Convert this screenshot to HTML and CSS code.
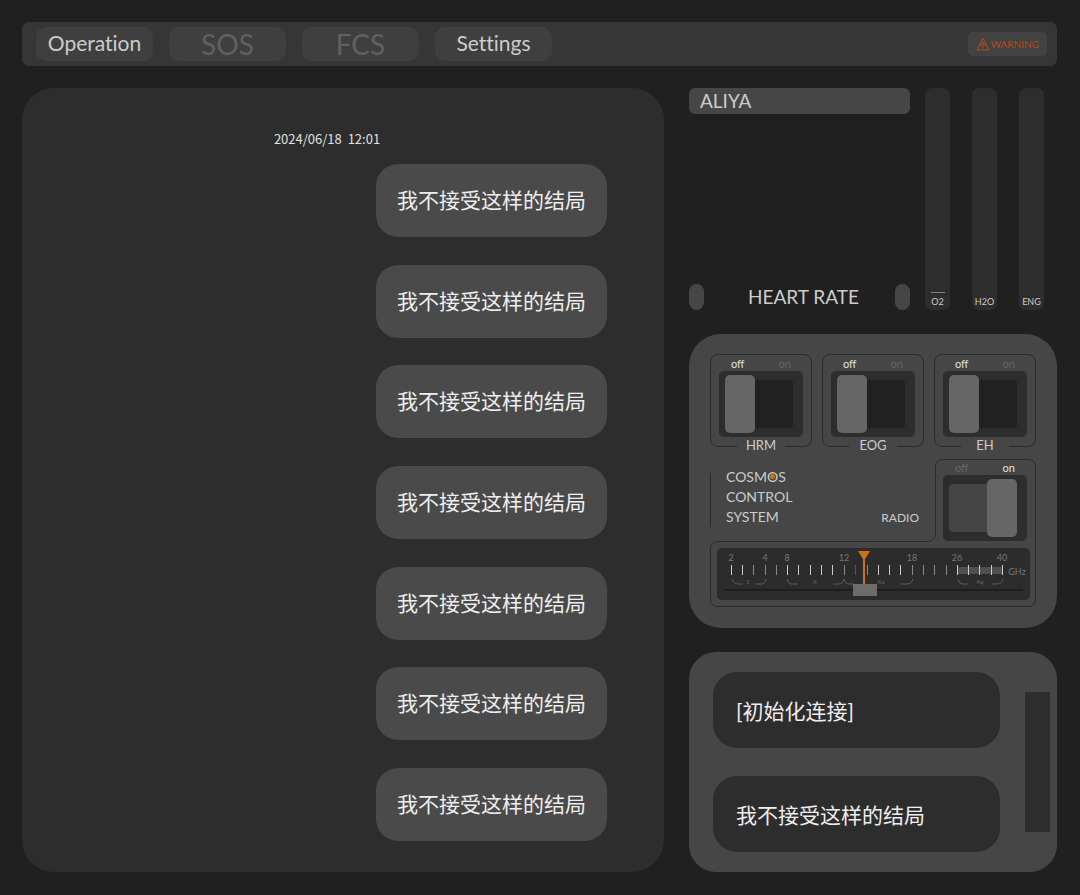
FILE: index.html
```html
<!DOCTYPE html>
<html lang="zh-CN">
<head>
  <meta charset="UTF-8">
  <meta name="viewport" content="width=device-width, initial-scale=1.0">
  <title>Operation</title>
  <link rel="stylesheet" href="styles.css">
</head>
<body>
  <header class="topbar">
    <nav class="nav">
      <button class="nav-btn" type="button">Operation</button>
      <button class="nav-btn locked" type="button" disabled>SOS</button>
      <button class="nav-btn locked" type="button" disabled>FCS</button>
      <button class="nav-btn" type="button">Settings</button>
    </nav>
    <button class="warning" type="button">
      <svg width="14" height="14" viewBox="0 0 14 14" fill="none" stroke="currentColor">
        <path d="M7 1 L13 13 H1 Z"/>
        <path d="M4.500 9 L7 5 L9.500 9 M7 5 V11.500"/>
      </svg>
      WARNING
    </button>
  </header>

  <main class="layout">
    <section class="chat">
      <time class="chat-time">2024/06/18&nbsp; 12:01</time>
      <ul class="messages">
        <li>我不接受这样的结局</li>
        <li>我不接受这样的结局</li>
        <li>我不接受这样的结局</li>
        <li>我不接受这样的结局</li>
        <li>我不接受这样的结局</li>
        <li>我不接受这样的结局</li>
        <li>我不接受这样的结局</li>
      </ul>
    </section>

    <div class="side">
      <section class="vitals">
        <div class="monitor">
          <h2 class="name">ALIYA</h2>
          <div class="heart">
            <span class="pill"></span>
            <span class="heart-title">HEART RATE</span>
            <span class="pill"></span>
          </div>
        </div>
        <div class="gauges">
          <div class="gauge"><span class="level"></span>O2</div>
          <div class="gauge">H2O</div>
          <div class="gauge">ENG</div>
        </div>
      </section>

      <section class="control">
        <div class="switches">
          <div class="switch framed">
            <div class="states"><span class="lit">off</span><span>on</span></div>
            <div class="housing"><input type="checkbox" id="hrm"></div>
            <label for="hrm">HRM</label>
          </div>
          <div class="switch framed">
            <div class="states"><span class="lit">off</span><span>on</span></div>
            <div class="housing"><input type="checkbox" id="eog"></div>
            <label for="eog">EOG</label>
          </div>
          <div class="switch framed">
            <div class="states"><span class="lit">off</span><span>on</span></div>
            <div class="housing"><input type="checkbox" id="eh"></div>
            <label for="eh">EH</label>
          </div>
        </div>

        <div class="radio">
          <svg class="outline" viewBox="0 0 326 148" preserveAspectRatio="none" fill="none">
            <path d="M8 82.5 H217 Q225.5 82.5 225.5 74 V8 Q225.5 .5 233 .5 H318 Q325.5 .5 325.5 8 V140 Q325.5 147.5 318 147.5 H8 Q.5 147.5 .5 140 V90 Q.5 82.5 8 82.5 Z"/>
          </svg>
          <div class="radio-top">
            <div class="system">
              <p>COSM<span class="dot">O</span>S<br>CONTROL<br>SYSTEM</p>
              <label for="radio">RADIO</label>
            </div>
            <div class="switch">
              <div class="states"><span>off</span><span class="lit">on</span></div>
              <div class="housing"><input type="checkbox" id="radio" checked></div>
            </div>
          </div>
          <div class="dial">
            <svg class="scale" viewBox="0 0 313 52">
              <rect x="241" y="19" width="44" height="7" fill="#505050"/>
              <g stroke="#ccc">
                <path d="M14.5 17v10M25.5 17v10M70.5 17v10M81.5 17v10M93.5 17v10M104.5 17v10M115.5 17v10M161.5 17v10M172.5 17v10M183.5 17v10M240.5 17v10M251.5 17v10M262.5 17v10M274.5 17v10M285.5 17v10"/>
                <path stroke="#888" d="M36.5 17v10M48.5 17v10M59.5 17v10M127.5 17v10M150.5 17v10M195.5 17v10M206.5 17v10M217.5 17v10M229.5 17v10"/>
                <path stroke="#555" d="M138.5 17v10"/>
              </g>
              <g stroke="#5c5c5c" fill="none">
                <path d="M15 31q2 5 5 5h6M38 36h6q4 0 5-5M70 31q1 5 4 5h7M116 36h6q4 0 5-5q1 5 5 5h5M184 36h6q5 0 6-5M241 31q1 5 4 5h6M275 36h5q5 0 6-5"/>
              </g>
              <g class="scale-num">
                <text x="14" y="13">2</text>
                <text x="48" y="13">4</text>
                <text x="70" y="13">8</text>
                <text x="127" y="13">12</text>
                <text x="195" y="13">18</text>
                <text x="240" y="13">26</text>
                <text x="285" y="13">40</text>
                <text x="300" y="27">GHz</text>
              </g>
              <g class="scale-band">
                <text x="31" y="36">S</text>
                <text x="98" y="36">X</text>
                <text x="164" y="36">Ka</text>
                <text x="263" y="36">Kq</text>
              </g>
              <path d="M141 3h12l-5 8v26h-2V11z" fill="#d07318"/>
            </svg>
            <input class="tuner" type="range" min="0" max="100" value="47" aria-label="GHz">
          </div>
        </div>
      </section>

      <section class="replies">
        <div class="reply-list">
          <button class="reply" type="button">[初始化连接]</button>
          <button class="reply" type="button">我不接受这样的结局</button>
        </div>
        <div class="scrollbar"></div>
      </section>
    </div>
  </main>
</body>
</html>
```

FILE: styles.css
```css
* {
  box-sizing: border-box;
}
body {
  margin: 0;
  padding: 22px 23px 23px 22px;
  min-height: 100vh;
  display: flex;
  flex-direction: column;
  gap: 22px;
  background: #202020;
  color: #ccc;
  font-family: Lato, "Noto Sans CJK SC", sans-serif;
}
button {
  border: 0;
  color: inherit;
  font-family: inherit;
  font-variant-ligatures: none;
  cursor: pointer;
}

/* top bar */
.topbar {
  display: flex;
  justify-content: space-between;
  align-items: center;
  height: 44px;
  padding: 0 10px 0 14px;
  border-radius: 7px;
  background: #363636;
}
.nav {
  display: flex;
  gap: 16px;
}
.nav-btn {
  width: 117px;
  height: 34px;
  padding: 0 0 2px;
  border-radius: 10px;
  background: #3f3f3f;
  font-size: 21px;
  line-height: 32px;
}
.nav-btn.locked {
  padding: 0;
  color: #606060;
  font-size: 28px;
  cursor: default;
}
.warning {
  display: flex;
  align-items: center;
  gap: 1px;
  height: 24px;
  padding: 0 8px;
  border-radius: 5px;
  background: #424242;
  color: #b54a1c;
  font-size: 10px;
}

.layout {
  flex: 1;
  display: grid;
  grid-template-columns: 642fr 368fr;
  gap: 25px;
}

/* chat */
.chat {
  display: flex;
  flex-direction: column;
  padding: 41px 57px 31px;
  border-radius: 32px;
  background: #2d2d2d;
}
.chat-time {
  align-self: center;
  margin-right: 32px;
  color: #e0e0e0;
  font-family: "Noto Sans CJK SC", sans-serif;
  font-size: 13px;
  line-height: 20px;
}
.messages {
  flex: 1;
  display: flex;
  flex-direction: column;
  justify-content: space-between;
  align-items: flex-end;
  margin: 15px 0 0;
  padding: 0;
  list-style: none;
}
.messages li {
  padding: 19px 21px 21px;
  border-radius: 22px;
  background: #4a4a4a;
  color: #eee;
  font-size: 21px;
  line-height: 33px;
}

.side {
  display: flex;
  flex-direction: column;
  gap: 24px;
}

/* vitals */
.vitals {
  display: flex;
  gap: 15px;
  min-height: 222px;
  padding-right: 13px;
}
.monitor {
  flex: 1;
  display: flex;
  flex-direction: column;
  justify-content: space-between;
}
.name {
  margin: 0;
  padding: 0 11px;
  border-radius: 6px;
  background: #464646;
  font-size: 19px;
  font-weight: 400;
  line-height: 26px;
}
.heart {
  display: flex;
  justify-content: space-between;
  align-items: center;
  font-size: 19px;
  line-height: 26px;
}
.heart-title {
  padding-left: 8px;
}
.pill {
  width: 15px;
  height: 26px;
  border-radius: 8px;
  background: #464646;
}
.gauges {
  display: flex;
  gap: 22px;
}
.gauge {
  display: flex;
  flex-direction: column;
  justify-content: flex-end;
  align-items: center;
  width: 25px;
  padding-bottom: 2px;
  border-radius: 7px;
  background: #2d2d2d;
  font-size: 9px;
  line-height: 12px;
}
.level {
  width: 14px;
  height: 1px;
  margin-bottom: 3px;
  background: #6f8f6c;
}

/* control panel */
.control {
  display: flex;
  flex-direction: column;
  gap: 12px;
  padding: 20px 21px 21px;
  border-radius: 32px;
  background: #464646;
}
.switches {
  display: grid;
  grid-template-columns: repeat(3, 1fr);
  gap: 10px;
}
.switch {
  display: flex;
  flex-direction: column;
  align-items: center;
}
.framed {
  padding-top: 2px;
  border: 1px solid #2a2a2a;
  border-radius: 8px;
}
.switch label {
  width: 48px;
  margin-bottom: -7px;
  background: #464646;
  font-size: 13px;
  line-height: 16px;
  text-align: center;
}
.states {
  display: flex;
  justify-content: space-between;
  width: 60px;
  color: #666;
  font-size: 11px;
  line-height: 14px;
}
.lit {
  color: #e0e0e0;
}
.housing {
  display: flex;
  justify-content: center;
  align-items: center;
  width: 84px;
  height: 66px;
  padding-right: 4px;
  border-radius: 5px;
  background: #2d2d2d;
}
.housing input {
  appearance: none;
  display: flex;
  align-items: center;
  width: 68px;
  height: 48px;
  margin: 0;
  border-radius: 4px;
  background: #212121;
  cursor: pointer;
}
.housing input::before {
  content: "";
  flex: none;
  width: 30px;
  height: 58px;
  border-radius: 5px;
  background: #666;
}
.housing input:checked {
  background: #454545;
}
.housing input:checked::before {
  margin-left: auto;
}

/* radio */
.radio {
  position: relative;
}
.outline {
  position: absolute;
  inset: 0;
  width: 100%;
  height: 100%;
}
.outline path {
  stroke: #2a2a2a;
  vector-effect: non-scaling-stroke;
}
.radio-top {
  display: flex;
}
.radio-top .switch {
  width: 102px;
  padding-top: 2px;
}
.system {
  flex: 1;
  display: flex;
  justify-content: space-between;
  align-items: flex-end;
  height: 54px;
  margin: 14px 15px 0 0;
  padding-left: 15px;
  border-left: 1px solid #2a2a2a;
}
.system p {
  margin: 0;
  font-size: 14px;
  line-height: 20px;
}
.system label {
  font-size: 12px;
  line-height: 18px;
}
.dot {
  background: radial-gradient(circle, #d07318 2px, transparent 3px);
}
.dial {
  display: grid;
  margin: 7px 6px 7px 7px;
  border-radius: 5px;
  background: #2c2c2c;
}
.scale,
.tuner {
  grid-area: 1 / 1;
}
.scale {
  display: block;
  width: 100%;
}
.scale-num {
  fill: #777;
  font-size: 9px;
  text-anchor: middle;
}
.scale-band {
  fill: #666;
  font-size: 6px;
  text-anchor: middle;
}
.tuner {
  appearance: none;
  align-self: end;
  height: 12px;
  margin: 0 7px 4px;
  background: linear-gradient(#1e1e1e, #1e1e1e) center / 100% 2px no-repeat;
  cursor: pointer;
}
.tuner::-webkit-slider-thumb {
  appearance: none;
  width: 24px;
  height: 12px;
  background: #6c6c6c;
}

/* replies */
.replies {
  flex: 1;
  display: flex;
  justify-content: space-between;
  padding: 20px 7px 20px 24px;
  border-radius: 27px;
  background: #464646;
}
.reply-list {
  flex: 1;
  display: flex;
  flex-direction: column;
  justify-content: space-between;
  margin-right: 25px;
}
.reply {
  height: 76px;
  padding: 0 23px;
  border-radius: 24px;
  background: #2d2d2d;
  color: #eee;
  font-size: 21px;
  text-align: left;
}
.scrollbar {
  width: 25px;
  margin: 20px 0;
  background: #2d2d2d;
}
```
